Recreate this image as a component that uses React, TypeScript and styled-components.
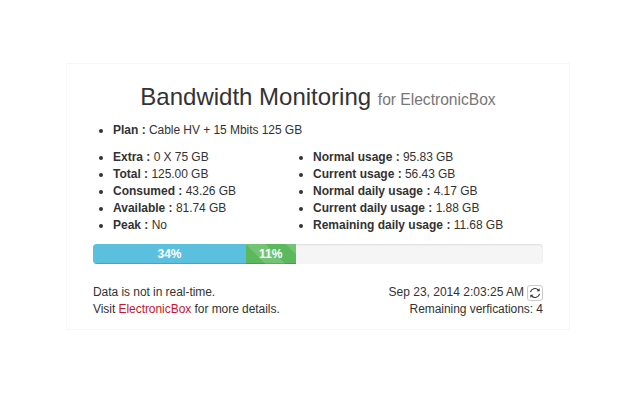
import React from "react";
import styled, { createGlobalStyle } from "styled-components";

const Global = createGlobalStyle`
  html, body { margin: 0; padding: 0; background: #fff; }
  body { font-family: "Liberation Sans", Arial, sans-serif; font-size: 12px; line-height: 17px; color: #333; }
`;
const Page = styled.div`
  width: 640px; height: 400px; padding-top: 63px; padding-left: 66px; box-sizing: border-box;
`;
const Card = styled.div`
  width: 504px; height: 267px; box-sizing: border-box; border: 1px solid #f7f7f7;
  padding: 0 26px;
`;
const Title = styled.h3`
  margin: 20px 0 12px; font-size: 24px; line-height: 26px; font-weight: 500; text-align: center; color: #333;
`;
const Sub = styled.small`
  font-size: 65%; font-weight: 400; color: #777; line-height: 1;
`;
const List = styled.ul`
  margin: 0 0 10px; padding: 0 0 0 20px;
  letter-spacing: -0.05px;
  b { letter-spacing: 0; }
`;
const Columns = styled.div`
  display: grid; grid-template-columns: 200px 1fr;
`;
const Bar = styled.div`
  display: flex; height: 20px; background: #f5f5f5; border-radius: 4px; overflow: hidden;
  box-shadow: inset 0 1px 2px rgba(0,0,0,.1);
`;
const Segment = styled.div<{ $color: string; $striped?: boolean }>`
  height: 20px; text-align: center; color: #fff; font-weight: 700; line-height: 20px;
  background-color: ${p => p.$color};
  box-shadow: inset 0 -1px 0 rgba(0,0,0,.15);
  ${p => p.$striped ? `background-image: linear-gradient(45deg, rgba(255,255,255,.15) 25%, transparent 25%, transparent 50%, rgba(255,255,255,.15) 50%, rgba(255,255,255,.15) 75%, transparent 75%, transparent); background-size: 40px 40px;` : ""}
`;
const Footer = styled.div`
  display: flex; justify-content: space-between; margin-top: 20px; letter-spacing: -0.05px;
`;
const Right = styled.div`
  text-align: right;
`;
const DateText = styled.span`
  letter-spacing: 0;
`;
const Link = styled.a`
  color: #c9142b; text-decoration: none;
`;
const Refresh = styled.button`
  display: inline-flex; align-items: center; justify-content: center; vertical-align: middle;
  width: 16px; height: 16px; padding: 0; margin-left: 3px; background: #fff;
  border: 1px solid #ccc; border-radius: 3px; color: #333;
`;

const Item = ({ k, v }: { k: string; v: string }) => (
  <li><b>{k} :</b> {v}</li>
);

export default function App() {
  return (
    <Page>
      <Global />
      <Card>
        <Title>Bandwidth Monitoring <Sub>for ElectronicBox</Sub></Title>
        <List><Item k="Plan" v="Cable HV + 15 Mbits 125 GB" /></List>
        <Columns>
          <List>
            <Item k="Extra" v="0 X 75 GB" />
            <Item k="Total" v="125.00 GB" />
            <Item k="Consumed" v="43.26 GB" />
            <Item k="Available" v="81.74 GB" />
            <Item k="Peak" v="No" />
          </List>
          <List>
            <Item k="Normal usage" v="95.83 GB" />
            <Item k="Current usage" v="56.43 GB" />
            <Item k="Normal daily usage" v="4.17 GB" />
            <Item k="Current daily usage" v="1.88 GB" />
            <Item k="Remaining daily usage" v="11.68 GB" />
          </List>
        </Columns>
        <Bar>
          <Segment $color="#5bc0de" style={{ width: "34%" }}>34%</Segment>
          <Segment $color="#5cb85c" $striped style={{ width: "11%" }}>11%</Segment>
        </Bar>
        <Footer>
          <div>Data is not in real-time.<br />Visit <Link href="#">ElectronicBox</Link> for more details.</div>
          <Right>
            <DateText>Sep 23, 2014 2:03:25 AM</DateText>
            <Refresh aria-label="refresh">
              <svg width="12" height="12" viewBox="0 0 12 12" fill="none" stroke="#333" strokeWidth="1.1">
                <path d="M1.5 5.2 A4.5 4.2 0 0 1 9.3 3" />
                <path d="M10.5 6.8 A4.5 4.2 0 0 1 2.7 9" />
                <path d="M10.7 1.2 V4.2 H7.7 Z" fill="#333" stroke="none" />
                <path d="M1.3 10.8 V7.8 H4.3 Z" fill="#333" stroke="none" />
              </svg>
            </Refresh>
            <br />Remaining verfications: 4
          </Right>
        </Footer>
      </Card>
    </Page>
  );
}
